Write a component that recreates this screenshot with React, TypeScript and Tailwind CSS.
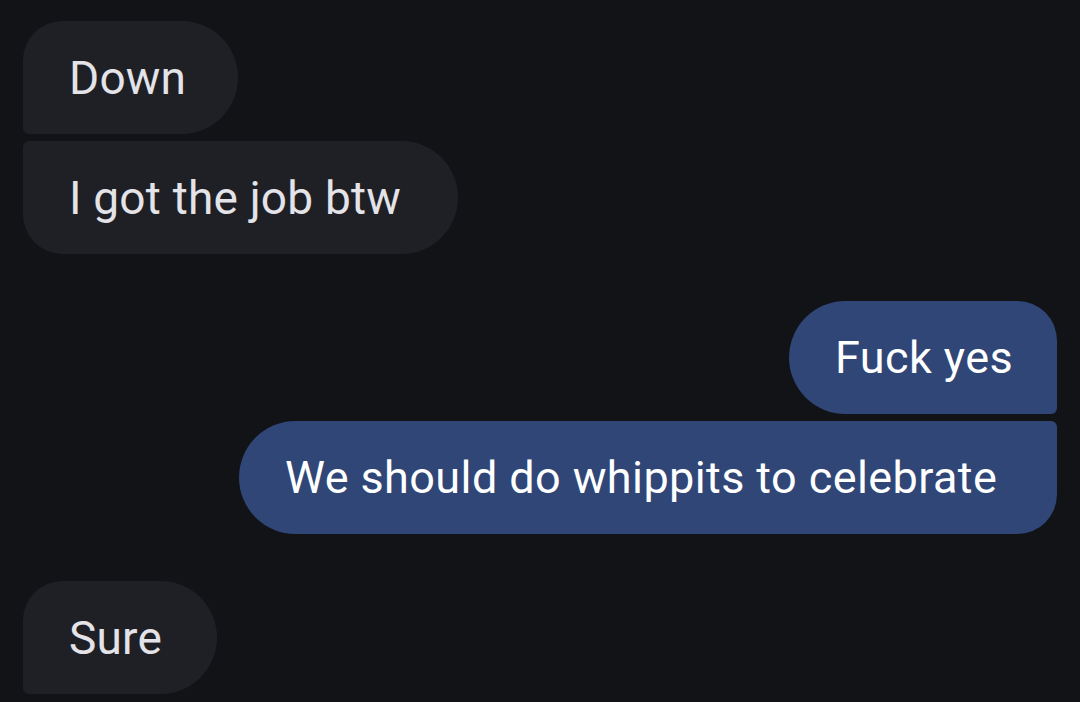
const messages = [
  { text: "Down", me: false, w: "w-[215px]", shape: "rounded-tl-[40px] rounded-bl-[6px] rounded-r-[57px]" },
  { text: "I got the job btw", me: false, w: "w-[435px]", shape: "rounded-tl-[6px] rounded-bl-[40px] rounded-r-[57px]", gapAfter: true },
  { text: "Fuck yes", me: true, w: "w-[268px]", shape: "rounded-tr-[40px] rounded-br-[6px] rounded-l-[57px]" },
  { text: "We should do whippits to celebrate", me: true, w: "w-[818px]", shape: "rounded-tr-[6px] rounded-br-[40px] rounded-l-[57px]", gapAfter: true },
  { text: "Sure", me: false, w: "w-[194px]", shape: "rounded-tl-[40px] rounded-bl-[6px] rounded-r-[57px]" },
]

export default function App() {
  return (
    <div
      className="h-[702px] w-[1080px] overflow-hidden bg-[#121317] pt-[21px] pl-[23px] pr-[23px]"
      style={{ fontFamily: "Roboto, 'Noto Sans', sans-serif" }}
    >
      <div className="flex flex-col">
        {messages.map((m, i) => (
          <div
            key={i}
            className={`flex ${m.me ? "justify-end" : "justify-start"} ${
              m.gapAfter ? "mb-[47px]" : "mb-[7px]"
            }`}
          >
            <div
              className={`${m.w} ${m.shape} flex h-[113px] items-center pl-[46px] leading-none ${
                m.me
                  ? "bg-[#2f4677] text-[45px] tracking-[0.4px] text-white"
                  : "bg-[#1f2025] text-[46px] tracking-[0.2px] text-[#e3e3e8]"
              }`}
            >
              <span className="whitespace-nowrap">{m.text}</span>
            </div>
          </div>
        ))}
      </div>
    </div>
  )
}
